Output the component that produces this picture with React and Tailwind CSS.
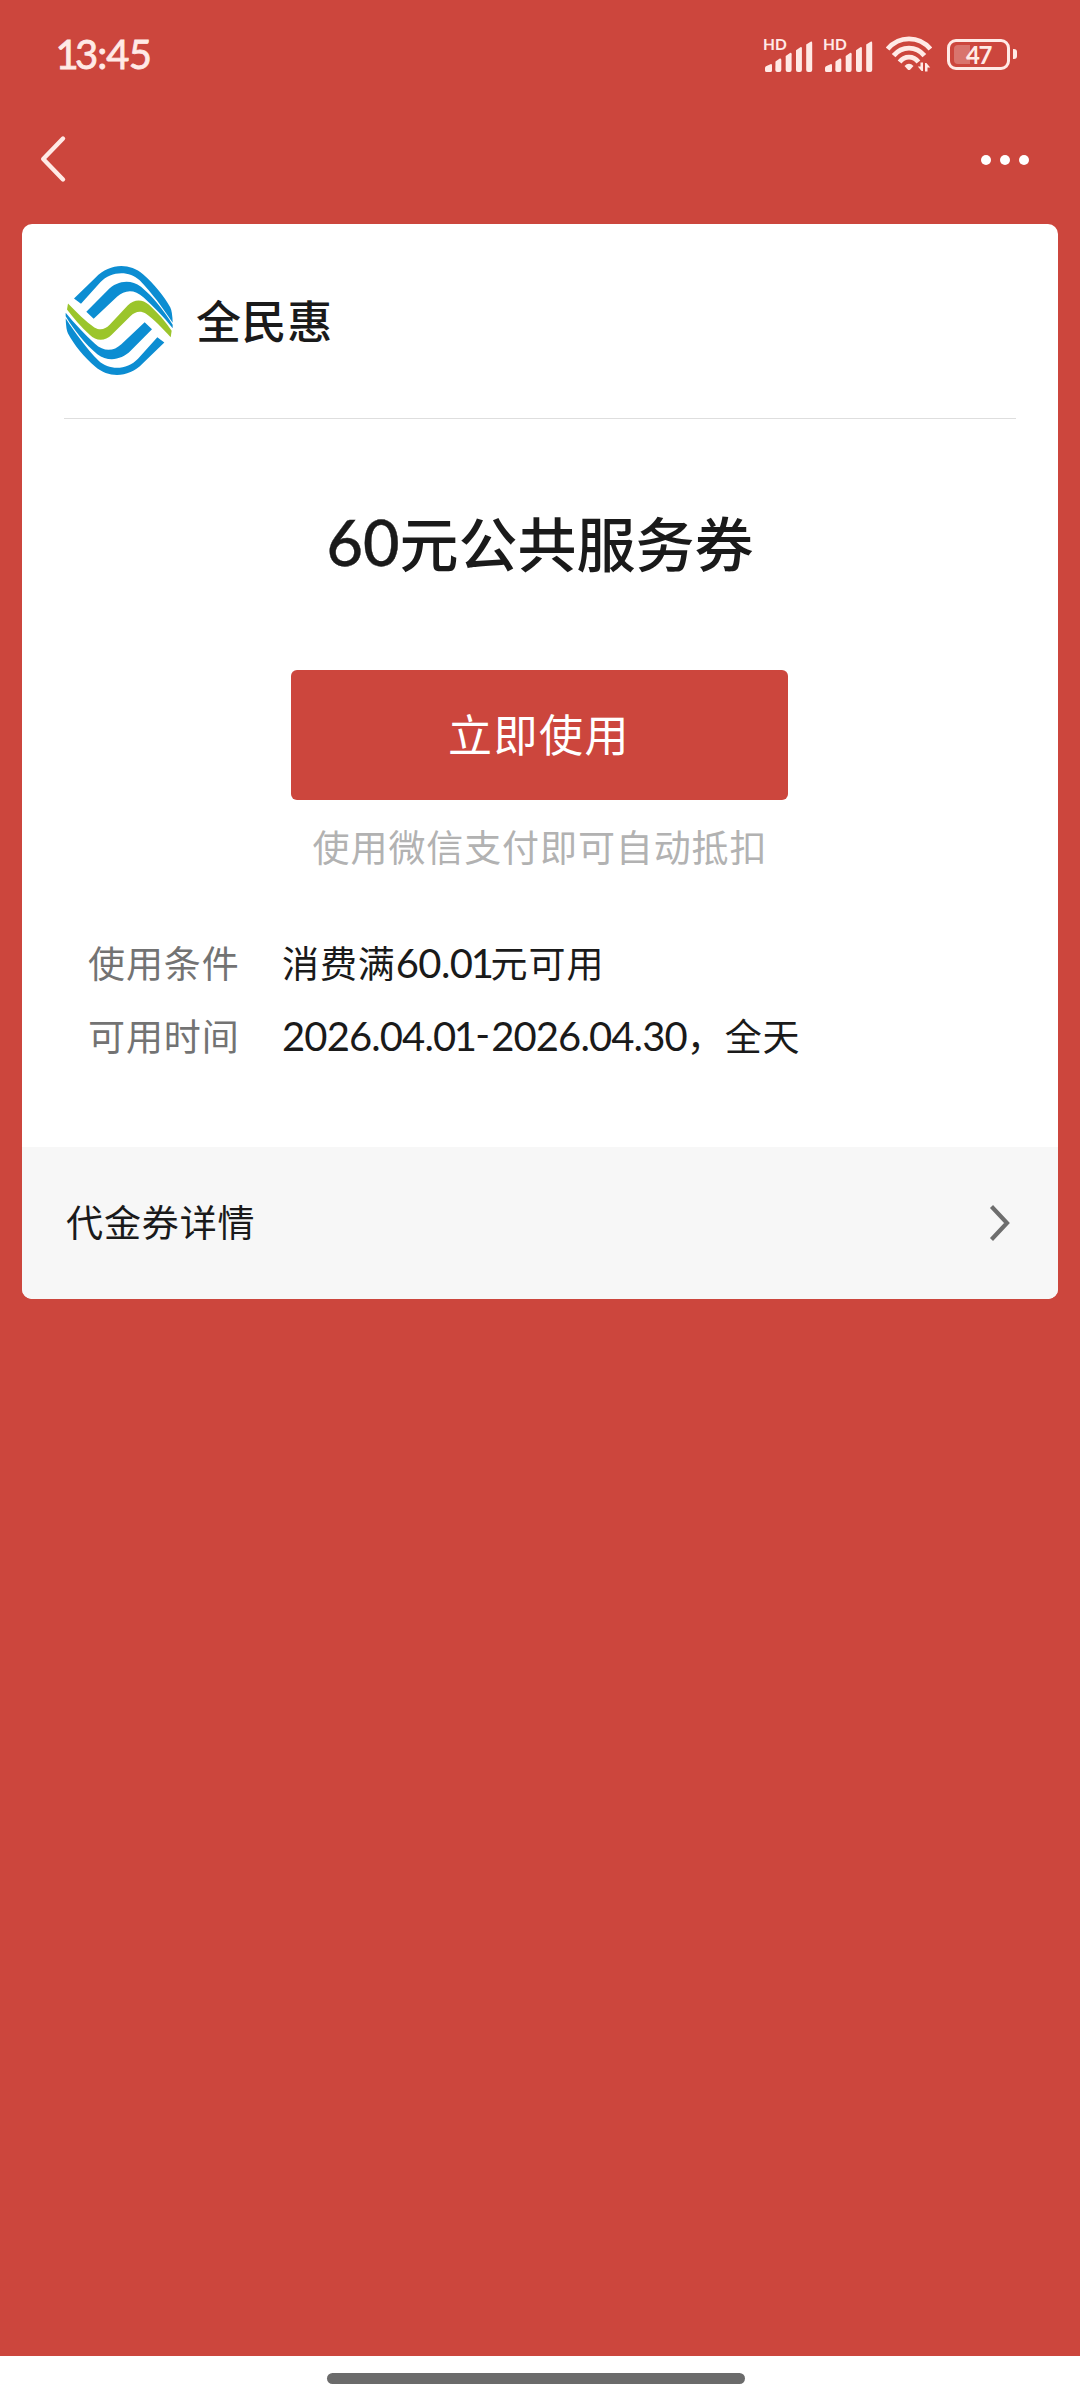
import React from "react";

const rows = [
  { label: "使用条件", value: ["消费满", "60.01", "元可用"], tracking: "tracking-[-0.6px]" },
  { label: "可用时间", value: ["", "2026.04.01-2026.04.30", "，全天"], tracking: "tracking-[-0.9px]" },
];

// digits with a narrow "1" and a raised hyphen, as in the system font
function Num({ text, className }) {
  return (
    <span className={`font-['Lato'] ${className}`}>
      {text.split("").map((c, i) => (
        <span key={i} className={c === "1" ? "-ml-[0.04em] -mr-[0.07em]" : c === "-" ? "relative -top-[2px] mx-[2px]" : ""}>{c}</span>
      ))}
    </span>
  );
}

function Signal() {
  return (
    <div className="relative h-[35px] w-[51px]">
      <span className="absolute top-0 left-0 font-['Lato'] text-[15.5px] leading-[15px] font-bold">HD</span>
      <svg className="absolute bottom-0 left-[2px]" width="48" height="31" viewBox="0 0 48 31" fill="currentColor">
        <path d="M1.5 31 Q0 31 0 29.5 V27 Q0 25.5 1.5 25 L5.5 23.2 Q7 22.8 7 24.5 V29.5 Q7 31 5.5 31 Z" />
        <path d="M10.5 20.5 L14.8 17.6 Q16.3 17 16.3 19 V29 Q16.3 31 14.3 31 H12.3 Q10.3 31 10.3 29 Z" />
        <path d="M20.7 15 L25 12 Q26.6 11.3 26.6 13.3 V29 Q26.6 31 24.6 31 H22.7 Q20.7 31 20.7 29 Z" />
        <path d="M31 9.3 L35.3 6.3 Q36.9 5.5 36.9 7.5 V29 Q36.9 31 34.9 31 H33 Q31 31 31 29 Z" />
        <path d="M41.2 3.6 L45.6 .7 Q47.2 0 47.2 2 V29 Q47.2 31 45.2 31 H43.2 Q41.2 31 41.2 29 Z" />
      </svg>
    </div>
  );
}

function Wifi() {
  return (
    <svg width="46" height="36" viewBox="0 0 46 36" fill="none" stroke="currentColor" strokeWidth="4.8">
      <path d="M1.6 13 C13 -0.6 33 -0.6 44.4 13" />
      <path d="M7.6 19.6 C16 9.6 30 9.6 38.4 19.6" />
      <path d="M13.6 26 C18.5 19.4 27.5 19.4 32.4 26" />
      <path d="M18.5 30 Q23 25.5 27.5 30 L24.3 33.4 Q23 34.4 21.7 33.4 Z" fill="currentColor" stroke="none" />
      <path d="M37 26.5 V35 H35.6 L31.8 30.6 H34.5 V26.5 Z M39 35.5 V27 H40.4 L44.2 31.4 H41.5 V35.5 Z" fill="currentColor" stroke="none" />
    </svg>
  );
}

function Battery() {
  return (
    <div className="flex items-center gap-[3px]">
      <div className="relative flex h-[31px] w-[63px] items-center justify-center rounded-[9px] border-[3px] border-current">
        <span className="absolute top-[3px] left-[4px] h-[19px] w-[16px] rounded-l-[4px] bg-white/25" />
        <span className="relative font-['Lato'] text-[24px] leading-[25px] font-bold tracking-[-1.5px]">47</span>
      </div>
      <span className="h-[10px] w-[4px] rounded-r-[3px] bg-current" />
    </div>
  );
}

function LogoStripes() {
  return (
    <>
      <path d="M71 147 L136 84 C176 42 236 38 278 74 C312 104 342 140 360 174 Q366 186 367 220 C336 172 306 132 268 92 C236 62 182 64 150 98 L92 163 Z" />
      <path d="M108 187 L172 122 C200 94 240 88 272 112 C308 142 340 182 367 226 V236 C338 200 310 172 280 144 C250 116 222 122 200 142 L130 208 Z" />
    </>
  );
}

function Logo() {
  return (
    <svg width="108" height="109" viewBox="44 50 324 326">
      <g fill="#0c8dd2">
        <LogoStripes />
        <g transform="rotate(180 206.5 213)">
          <LogoStripes />
        </g>
      </g>
      <path fill="#9bc52b" d="M53 162 C80 190 106 216 132 234 C150 244 164 240 178 226 L232 168 C252 148 276 148 296 166 C322 190 346 216 364 244 L361 263 C336 236 310 208 286 192 C270 182 254 186 240 200 L184 256 C164 276 138 276 118 256 C92 232 70 206 50 180 Z" />
    </svg>
  );
}

export default function App() {
  return (
    <div className="flex h-[2400px] w-[1080px] flex-col bg-[#cc463d] font-['Noto_Sans_CJK_SC',sans-serif] text-[#1a1a1a]">
      <header className="flex h-[108px] shrink-0 items-center justify-between pr-[63px] pl-[57px] text-[#ffeae6]">
        <Num text="13:45" className="text-[40px] leading-[48px] tracking-[-0.9px] [-webkit-text-stroke:0.8px_#ffeae6]" />
        <div className="flex items-center">
          <Signal />
          <div className="ml-[9px]"><Signal /></div>
          <div className="ml-[12px]"><Wifi /></div>
          <div className="ml-[15px]"><Battery /></div>
        </div>
      </header>

      <nav className="flex h-[116px] shrink-0 items-start justify-between pt-[26px] pr-[51px] pl-[39px]">
        <svg width="28" height="50" viewBox="0 0 28 50" fill="none" stroke="#ffeae6" strokeWidth="4.4" strokeLinecap="round" strokeLinejoin="round">
          <path d="M24 4.5 L4.2 25 L24 45.5" />
        </svg>
        <div className="flex h-[51px] items-center gap-[9px]">
          <span className="size-[10px] rounded-full bg-white" />
          <span className="size-[10px] rounded-full bg-white" />
          <span className="size-[10px] rounded-full bg-white" />
        </div>
      </nav>

      <main className="mx-[22px] flex h-[1075px] shrink-0 flex-col overflow-hidden rounded-[10px] bg-white">
        <div className="mx-[42px] flex h-[195px] shrink-0 items-center border-b border-[#dedede]">
          <div className="mb-px ml-px"><Logo /></div>
          <h1 className="mb-[3px] ml-[23px] text-[45px] leading-[60px] font-medium tracking-[0.6px]">全民惠</h1>
        </div>

        <section className="flex flex-col items-center">
          <h2 className="mt-[79px] flex h-[88px] items-center text-[59px] leading-[88px] font-medium">
            <Num text="60" className="text-[63px] [-webkit-text-stroke:0.4px_#1a1a1a]" />元公共服务券
          </h2>
          <button className="mt-[84px] mr-[2px] h-[130px] w-[497px] rounded-[6px] bg-[#cc463d] pb-[4px] text-[44px] leading-[60px] tracking-[1.5px] text-white">
            立即使用
          </button>
          <p className="mt-[19px] text-[37px] leading-[54px] tracking-[0.9px] text-[#b2b2b2]">使用微信支付即可自动抵扣</p>
        </section>

        <dl className="mt-[52px] ml-[66px]">
          {rows.map((row) => (
            <div key={row.label} className="flex h-[73px] items-center text-[37px] leading-[54px] tracking-[0.9px]">
              <dt className="w-[194px] text-[#737373]">{row.label}</dt>
              <dd className="flex items-center">
                {row.value[0]}
                <Num text={row.value[1]} className={`relative top-px text-[40px] ${row.tracking}`} />
                {row.value[2]}
              </dd>
            </div>
          ))}
        </dl>

        <footer className="mt-auto flex h-[152px] shrink-0 items-center justify-between bg-[#f7f7f7] pr-[47px] pl-[44px]">
          <span className="mb-[4px] text-[37px] leading-[54px] tracking-[0.9px]">代金券详情</span>
          <svg width="22" height="38" viewBox="0 0 22 38" fill="none" stroke="#6e6e6e" strokeWidth="4.2">
            <path d="M2.5 2.5 L18 19 L2.5 35.5" />
          </svg>
        </footer>
      </main>

      <div className="mt-auto flex h-[44px] shrink-0 justify-center bg-white pt-[17px] pr-[8px]">
        <div className="h-[11px] w-[418px] rounded-full bg-[#6b6b6b]" />
      </div>
    </div>
  );
}
